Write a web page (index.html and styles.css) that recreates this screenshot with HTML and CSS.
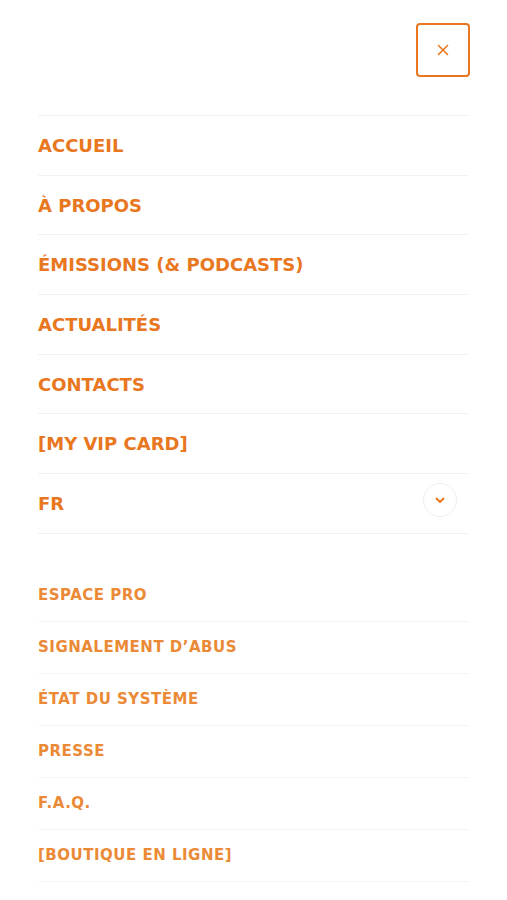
FILE: index.html
```html
<!DOCTYPE html>
<html lang="fr">
<head>
    <meta charset="UTF-8">
    <meta name="viewport" content="width=device-width, initial-scale=1.0">
    <title>Menu</title>
    <link rel="stylesheet" href="styles.css">
</head>
<body>
    <div class="menu">
        <div class="menu-header">
            <button class="close-btn" aria-label="Fermer">
                <svg width="12" height="12" viewBox="0 0 12 12">
                    <path d="M1.5 1.5 L10.5 10.5 M10.5 1.5 L1.5 10.5" stroke="#e8771f" stroke-width="1.6" stroke-linecap="round" fill="none"/>
                </svg>
            </button>
        </div>

        <ul class="main-nav">
            <li><a href="#">ACCUEIL</a></li>
            <li><a href="#">À PROPOS</a></li>
            <li><a href="#">ÉMISSIONS (&amp; PODCASTS)</a></li>
            <li><a href="#">ACTUALITÉS</a></li>
            <li><a href="#">CONTACTS</a></li>
            <li><a href="#">[MY VIP CARD]</a></li>
            <li class="lang">
                <a href="#">FR</a>
                <span class="toggle">
                    <svg width="10" height="7" viewBox="0 0 10 7">
                        <path d="M1.5 1.5 L5 5 L8.5 1.5" stroke="#e8771f" stroke-width="1.8" stroke-linecap="round" stroke-linejoin="round" fill="none"/>
                    </svg>
                </span>
            </li>
        </ul>

        <ul class="sub-nav">
            <li><a href="#">ESPACE PRO</a></li>
            <li><a href="#">SIGNALEMENT D’ABUS</a></li>
            <li><a href="#">ÉTAT DU SYSTÈME</a></li>
            <li><a href="#">PRESSE</a></li>
            <li><a href="#">F.A.Q.</a></li>
            <li><a href="#">[BOUTIQUE EN LIGNE]</a></li>
        </ul>
    </div>
</body>
</html>
```

FILE: styles.css
```css
body {
    margin: 0;
    background-color: #fff;
    font-family: "DejaVu Sans", "Open Sans", sans-serif;
}

.menu {
    padding: 23px 38px 0 38px;
}

.menu-header {
    display: flex;
    justify-content: flex-end;
}

.close-btn {
    width: 54px;
    height: 54px;
    border: 2px solid #e8771f;
    border-radius: 4px;
    background: none;
    display: flex;
    align-items: center;
    justify-content: center;
    padding: 0;
    margin-right: -1px;
}

ul {
    list-style: none;
    margin: 0;
    padding: 0;
}

.main-nav {
    margin-top: 38px;
    border-top: 1px solid #f2f2f2;
}

.main-nav li {
    height: 58.7px;
    border-bottom: 1px solid #f2f2f2;
    display: flex;
    align-items: center;
    justify-content: space-between;
}

.main-nav a {
    color: #e8771f;
    text-decoration: none;
    font-weight: bold;
    font-size: 18px;
}

.toggle {
    width: 32px;
    height: 32px;
    border: 1px solid #eeeeee;
    border-radius: 50%;
    display: flex;
    align-items: center;
    justify-content: center;
    margin-right: 12px;
    margin-top: -6px;
}

.sub-nav {
    margin-top: 36px;
}

.sub-nav li {
    height: 51px;
    border-bottom: 1px solid #f5f5f5;
    display: flex;
    align-items: center;
}

.sub-nav a {
    color: #eb8a36;
    text-decoration: none;
    font-weight: bold;
    font-size: 15px;
    letter-spacing: 0.5px;
}
```
